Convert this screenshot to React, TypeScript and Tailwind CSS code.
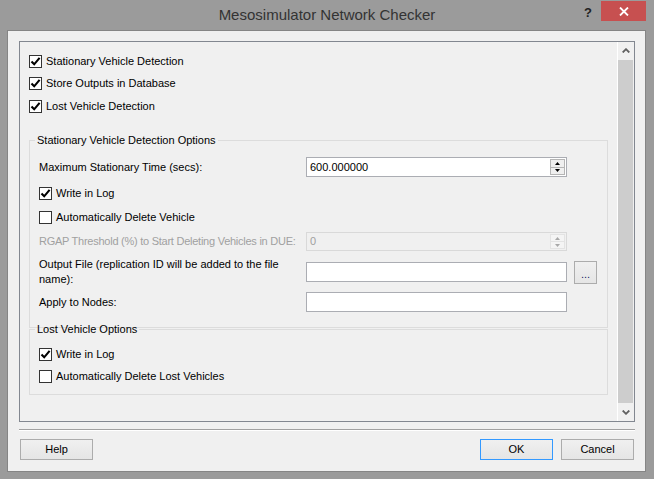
import React from "react";

function Tick() {
  return (
    <svg width="11" height="11" viewBox="0 0 11 11">
      <path d="M1.5 5.5 L4.2 8.3 L9.6 1.8" fill="none" stroke="#000" strokeWidth="2.1" />
    </svg>
  );
}

function CheckRow({ label, checked, className = "" }: { label: string; checked?: boolean; className?: string }) {
  return (
    <div className={`flex items-center gap-[4px] ${className}`}>
      <span className="w-[13px] h-[13px] border border-[#333] bg-white flex items-center justify-center shrink-0">
        {checked && <Tick />}
      </span>
      <span className="whitespace-nowrap">{label}</span>
    </div>
  );
}

function Arrow({ up, color }: { up?: boolean; color: string }) {
  return (
    <svg width="5" height="3" viewBox="0 0 5 3">
      <path d={up ? "M0 3 L2.5 0 L5 3 Z" : "M0 0 L2.5 3 L5 0 Z"} fill={color} />
    </svg>
  );
}

function SpinBox({ value, disabled }: { value: string; disabled?: boolean }) {
  return (
    <div
      className={`w-[261px] h-full flex items-center border ${
        disabled ? "border-[#d9d9d9] bg-[#f0f0f0] text-[#a0a0a0]" : "border-[#abadb3] bg-white text-black"
      }`}
    >
      <span className="flex-1 pl-[3px]">{value}</span>
      <div className="w-[15px] h-full py-[1px] mr-[1px] flex flex-col">
        <div
          className={`flex-1 flex items-center justify-center border ${
            disabled ? "border-[#e3e3e3] bg-[#f4f4f4]" : "border-[#b5b5b5] bg-[#efefef]"
          }`}
        >
          <Arrow up color={disabled ? "#a8a8a8" : "#000"} />
        </div>
        <div
          className={`flex-1 flex items-center justify-center border border-t-0 ${
            disabled ? "border-[#e3e3e3] bg-[#f4f4f4]" : "border-[#b5b5b5] bg-[#efefef]"
          }`}
        >
          <Arrow color={disabled ? "#a8a8a8" : "#000"} />
        </div>
      </div>
    </div>
  );
}

function Chevron({ up }: { up?: boolean }) {
  return (
    <svg width="8" height="5" viewBox="0 0 8 5">
      <path d={up ? "M0.7 4.5 L4 1.2 L7.3 4.5" : "M0.7 0.5 L4 3.8 L7.3 0.5"} fill="none" stroke="#606060" strokeWidth="1.8" />
    </svg>
  );
}

function Button({ label, focused, className = "" }: { label: string; focused?: boolean; className?: string }) {
  return (
    <div
      className={`w-[73px] h-[21px] flex items-center justify-center border bg-gradient-to-b from-[#f0f0f0] to-[#e5e5e5] ${
        focused ? "border-[#3399ff]" : "border-[#acacac]"
      } ${className}`}
    >
      {label}
    </div>
  );
}

export default function App() {
  return (
    <div className="w-[654px] h-[479px] bg-[#9b9b9b] flex flex-col font-['Liberation_Sans',Arial,sans-serif] text-[11px] text-black">
      {/* title bar */}
      <div className="relative h-[30px] flex items-center justify-center">
        <span className="text-[15px] text-[#333] pt-[1px]">Mesosimulator Network Checker</span>
        <span className="absolute left-[584px] top-[3px] text-[13px] font-bold text-[#222]">?</span>
        <div className="absolute left-[601px] top-[1px] w-[45px] h-[20px] bg-[#c75050] flex items-center justify-center">
          <svg width="10" height="9" viewBox="0 0 10 9">
            <path d="M1 0.5 L9 8.5 M9 0.5 L1 8.5" stroke="#fff" strokeWidth="1.8" />
          </svg>
        </div>
      </div>

      {/* client area */}
      <div className="ml-[7px] w-[639px] h-[442px] border border-[#858585] bg-[#f0f0f0] flex flex-col">
        <div className="mt-[10px] ml-[11px] w-[616px] h-[381px] border border-[#828790] flex">
          <div className="flex-1 flex flex-col pt-[8px] overflow-hidden">
            <CheckRow label="Stationary Vehicle Detection" checked className="h-[22px] pl-[9px]" />
            <CheckRow label="Store Outputs in Database" checked className="h-[23px] pl-[9px]" />
            <CheckRow label="Lost Vehicle Detection" checked className="h-[22px] pl-[9px]" />

            <fieldset className="mt-[16px] ml-[9px] w-[579px] border border-[#dcdcdc] pl-[9px] pb-[15px]">
              <legend className="-ml-[4px] px-[2px] leading-[14px]">Stationary Vehicle Detection Options</legend>
              <div className="mt-[10px] h-[20px] flex items-center">
                <span className="w-[267px]">Maximum Stationary Time (secs):</span>
                <SpinBox value="600.000000" />
              </div>
              <CheckRow label="Write in Log" checked className="mt-[8px] h-[16px]" />
              <CheckRow label="Automatically Delete Vehicle" className="mt-[8px] h-[16px]" />
              <div className="mt-[7px] h-[19px] flex items-center">
                <span className="w-[267px] text-[#a0a0a0] whitespace-nowrap tracking-[-0.25px]">
                  RGAP Threshold (%) to Start Deleting Vehicles in DUE:
                </span>
                <SpinBox value="0" disabled />
              </div>
              <div className="mt-[6px] h-[30px] flex items-center">
                <span className="w-[267px] leading-[15px]">
                  Output File (replication ID will be added to the file
                  <br />
                  name):
                </span>
                <div className="w-[261px] h-[20px] border border-[#abadb3] bg-white" />
                <div className="ml-[7px] w-[23px] h-[23px] border border-[#acacac] bg-gradient-to-b from-[#f0f0f0] to-[#e5e5e5] flex items-end justify-center pb-[5px] leading-[8px] text-[#1a1a6a]">
                  ...
                </div>
              </div>
              <div className="mt-[5px] h-[20px] flex items-center">
                <span className="w-[267px]">Apply to Nodes:</span>
                <div className="w-[261px] h-[20px] border border-[#abadb3] bg-white" />
              </div>
            </fieldset>

            <fieldset className="-mt-[6px] ml-[9px] w-[579px] border border-[#dcdcdc] pl-[9px] pb-[10px]">
              <legend className="-ml-[4px] px-[2px] leading-[14px]">Lost Vehicle Options</legend>
              <CheckRow label="Write in Log" checked className="mt-[10px] h-[16px]" />
              <CheckRow label="Automatically Delete Lost Vehicles" className="mt-[6px] h-[16px]" />
            </fieldset>
          </div>

          {/* scrollbar */}
          <div className="w-[17px] flex flex-col border-l border-white bg-[#f0f0f0]">
            <div className="h-[17px] flex items-center justify-center">
              <Chevron up />
            </div>
            <div className="flex-1 my-[1px] mr-[1px] bg-[#cdcdcd]" />
            <div className="h-[17px] flex items-center justify-center">
              <Chevron />
            </div>
          </div>
        </div>

        <div className="mt-[7px] ml-[11px] w-[616px] h-[2px] border-t border-[#a0a0a0] border-b border-b-white" />

        <div className="mt-[8px] flex items-center">
          <Button label="Help" className="ml-[12px]" />
          <div className="flex-1" />
          <Button label="OK" focused />
          <Button label="Cancel" className="ml-[8px] mr-[11px]" />
        </div>
      </div>
    </div>
  );
}
